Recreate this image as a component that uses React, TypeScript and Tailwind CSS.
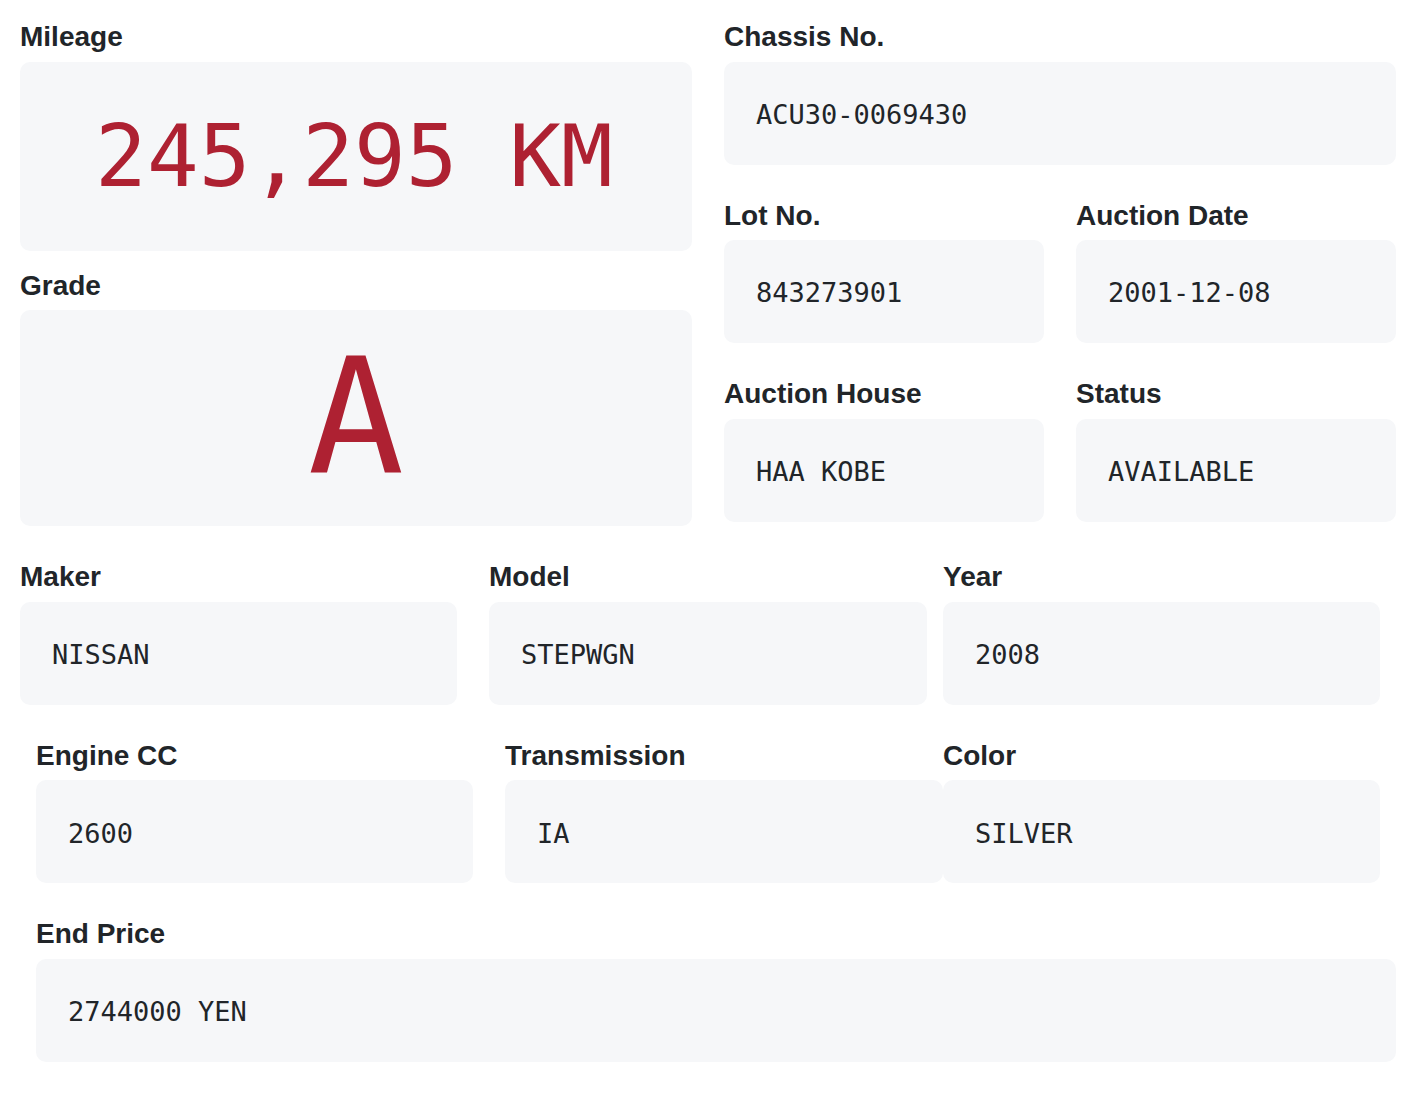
import React from 'react';

const labelFont = { fontFamily: '"Liberation Sans", Arial, sans-serif' };
const monoFont = { fontFamily: '"DejaVu Sans Mono", "Liberation Mono", monospace' };

type FieldProps = {
  label: string;
  value: string;
  className?: string;
};

// plain label + grey value box
const Field: React.FC<FieldProps> = ({ label, value, className = '' }) => (
  <div className={className}>
    <div className="text-[28px] leading-[1.2] font-bold text-[#212529] mb-2" style={labelFont}>
      {label}
    </div>
    <div className="h-[103px] rounded-[10px] bg-[#f6f7f9] flex items-center pl-8 pt-1">
      <span className="text-[27px] text-[#212529] whitespace-pre" style={monoFont}>
        {value}
      </span>
    </div>
  </div>
);

const App: React.FC = () => {
  return (
    <div className="min-h-screen bg-white pt-5">
      {/* Top: big numbers on the left, auction info on the right */}
      <div className="flex pl-5 gap-8">
        <div className="w-[672px] flex flex-col gap-[18px]">
          <div>
            <div className="text-[28px] leading-[1.2] font-bold text-[#212529] mb-2" style={labelFont}>
              Mileage
            </div>
            <div className="h-[189px] rounded-[10px] bg-[#f6f7f9] flex items-center justify-center pr-1">
              <span className="text-[86px] leading-none text-[#ae2132] whitespace-pre" style={monoFont}>
                245,295 KM
              </span>
            </div>
          </div>
          <div>
            <div className="text-[28px] leading-[1.2] font-bold text-[#212529] mb-2" style={labelFont}>
              Grade
            </div>
            <div className="h-[216px] rounded-[10px] bg-[#f6f7f9] flex items-center justify-center">
              <span className="text-[160px] leading-none text-[#ae2132]" style={monoFont}>
                A
              </span>
            </div>
          </div>
        </div>

        <div className="w-[672px] flex flex-col gap-[34px]">
          <Field label="Chassis No." value="ACU30-0069430" />
          <div className="grid grid-cols-2 gap-x-8 gap-y-[34px]">
            <Field label="Lot No." value="843273901" />
            <Field label="Auction Date" value="2001-12-08" />
            <Field label="Auction House" value="HAA KOBE" />
            <Field label="Status" value="AVAILABLE" />
          </div>
        </div>
      </div>

      {/* Vehicle details */}
      <div className="mt-[34px] flex flex-col gap-[34px]">
        <div className="flex pl-5">
          <Field label="Maker" value="NISSAN" className="w-[437px]" />
          <Field label="Model" value="STEPWGN" className="w-[438px] ml-8" />
          <Field label="Year" value="2008" className="w-[437px] ml-4" />
        </div>
        <div className="flex pl-9">
          <Field label="Engine CC" value="2600" className="w-[437px]" />
          <Field label="Transmission" value="IA" className="w-[438px] ml-8" />
          <Field label="Color" value="SILVER" className="w-[437px]" />
        </div>
        <div className="flex pl-9">
          <Field label="End Price" value="2744000 YEN" className="w-[1360px]" />
        </div>
      </div>
    </div>
  );
};

export default App;
